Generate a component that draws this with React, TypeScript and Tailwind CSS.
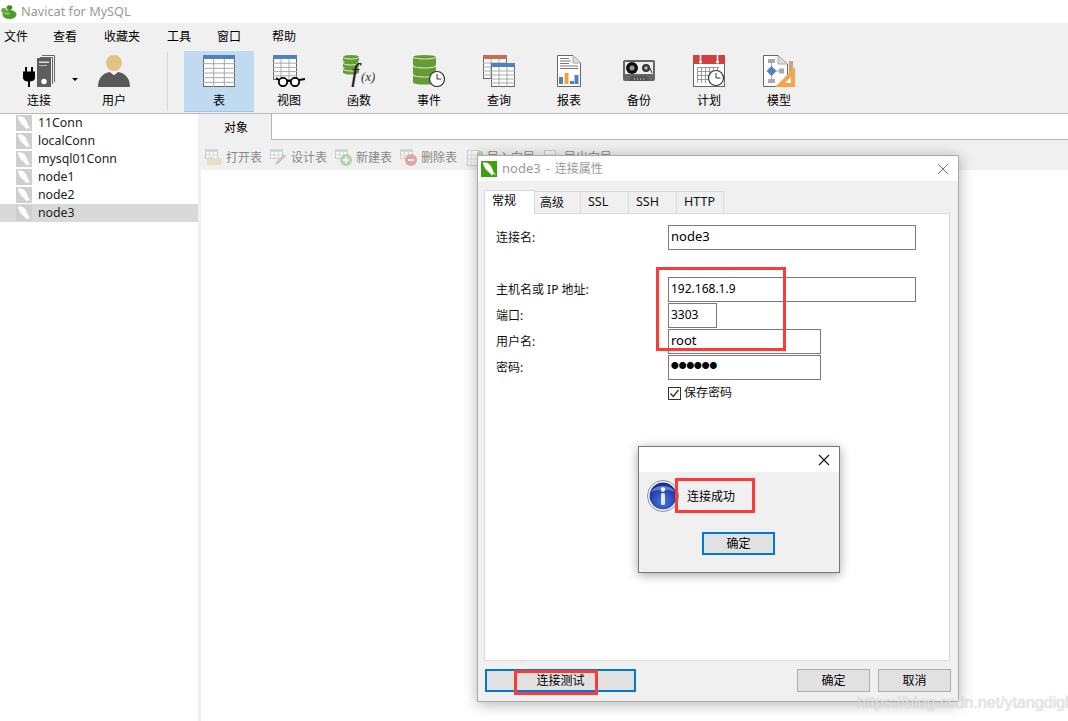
import React from 'react';

// Small dolphin used on connection rows and the dialog title
const Dolphin: React.FC<{ bg: string; className?: string }> = ({ bg, className }) => (
  <svg width="16" height="16" viewBox="0 0 16 16" className={className}>
    <rect width="16" height="16" fill={bg} />
    <path d="M1.5 1.5 H5 C8 2 10 4.5 11 7.5 C12 10 13 12 15 14.5 L11.5 12.5 L11.5 15 C9.5 13.5 8.5 11.5 6.5 10 C4 8.5 3 5 1.5 1.5 Z" fill="#fff" />
  </svg>
);

const NavicatLogo = () => (
  <svg width="16" height="14" viewBox="0 0 16 14">
    <ellipse cx="8.5" cy="9.5" rx="7" ry="4.5" fill="#4f9a2c" />
    <ellipse cx="2.8" cy="5.5" rx="2.6" ry="2.4" fill="#62ab35" />
    <ellipse cx="8.5" cy="2.6" rx="2.8" ry="2.4" fill="#3f8a24" />
    <ellipse cx="6" cy="8.5" rx="3" ry="1.6" fill="#7cc44c" />
  </svg>
);

const ConnIcon = () => (
  <svg width="32" height="32" viewBox="0 0 32 32">
    <path d="M19 0.5 H31.5 V27" stroke="#666" strokeWidth="1" fill="none" />
    <path d="M17 2.5 H29.5 V29" stroke="#666" strokeWidth="1" fill="none" />
    <rect x="14" y="3" width="14" height="29" fill="#5e5e5e" />
    <rect x="16" y="6.5" width="10" height="1.5" fill="#ddd" />
    <rect x="16" y="10" width="8" height="1" fill="#bbb" />
    <circle cx="21" cy="26.5" r="2.7" fill="#fff" />
    <path d="M3 12 V17 M9 12 V17" stroke="#000" strokeWidth="2" />
    <path d="M0 16.5 H12 V23 C12 25.5 8.5 26.5 7 26.5 V32 H5 V26.5 C3.5 26.5 0 25.5 0 23 Z" fill="#000" />
  </svg>
);

const UserIcon = () => (
  <svg width="32" height="32" viewBox="0 0 32 32">
    <circle cx="16" cy="8" r="8" fill="#e3c282" />
    <path d="M0 32 C0 22 6 18 12 17 L16 20 L20 17 C26 18 32 22 32 32 Z" fill="#595959" />
    <path d="M12 17 L16 20 L20 17 L16 18 Z" fill="#fff" />
  </svg>
);

const GridTable = ({ x, y, w, h, head, rows = 6, cols = 3 }: { x: number; y: number; w: number; h: number; head: string; rows?: number; cols?: number }) => (
  <g>
    <rect x={x + 0.5} y={y + 0.5} width={w - 1} height={h - 1} fill="#fff" stroke="#666" />
    {Array.from({ length: rows - 1 }).map((_, i) => (
      <path key={i} d={`M${x} ${y + 4 + ((h - 4) * (i + 1)) / rows} H${x + w}`} stroke="#a9a9a9" strokeWidth="1" />
    ))}
    {Array.from({ length: cols - 1 }).map((_, i) => (
      <path key={i} d={`M${x + (w * (i + 1)) / cols} ${y + 4} V${y + h}`} stroke="#a9a9a9" strokeWidth="1" />
    ))}
    <rect x={x} y={y} width={w} height={4} fill={head} />
  </g>
);

const TableIcon = () => (
  <svg width="32" height="32" viewBox="0 0 32 32">
    <GridTable x={0} y={0} w={32} h={32} head="#4f81bd" />
  </svg>
);

const ViewIcon = () => (
  <svg width="32" height="32" viewBox="0 0 32 32">
    <GridTable x={0} y={0} w={24} h={25} head="#4f81bd" rows={5} />
    <circle cx="10" cy="27" r="4.2" fill="#fff" stroke="#000" strokeWidth="1.8" />
    <circle cx="22" cy="27" r="4.2" fill="#fff" stroke="#000" strokeWidth="1.8" />
    <path d="M14 26 H18 M26 25 L32 24 M6 25 L3 23" stroke="#000" strokeWidth="1.8" />
  </svg>
);

// One slice of a database cylinder; stacked slices leave a curved gap between them
const Drum = ({ w, h, y = 0 }: { w: number; h: number; y?: number }) => (
  <g>
    <path d={`M0 ${y + 2} A${w / 2} 2 0 0 1 ${w} ${y + 2} V${y + h - 1.5} A${w / 2} 2 0 0 1 0 ${y + h - 1.5} Z`} fill="#669c35" />
    <path d={`M0 ${y + 2} A${w / 2} 2 0 0 0 ${w} ${y + 2}`} fill="none" stroke="#dfe8d4" strokeWidth="1" />
  </g>
);

const FuncIcon = () => (
  <svg width="32" height="32" viewBox="0 0 32 32">
    <Drum w={16} h={7} />
    <Drum w={16} h={7} y={6} />
    <Drum w={16} h={7} y={12} />
    <text x="8" y="27" fontFamily="Liberation Serif, serif" fontStyle="italic" fontSize="27" fill="#222">f</text>
    <text x="18" y="26" fontFamily="Liberation Serif, serif" fontStyle="italic" fontSize="13" fill="#333">(x)</text>
  </svg>
);

const Clock = ({ cx, cy, r }: { cx: number; cy: number; r: number }) => (
  <g>
    <circle cx={cx} cy={cy} r={r} fill="#fff" stroke="#333" strokeWidth="1.2" />
    <path d={`M${cx} ${cy - r + 2.5} V${cy} H${cx + r - 3}`} stroke="#333" strokeWidth="1" fill="none" />
  </g>
);

const EventIcon = () => (
  <svg width="32" height="32" viewBox="0 0 32 32">
    <Drum w={23} h={11} />
    <Drum w={23} h={11} y={9} />
    <Drum w={23} h={11} y={18} />
    <Clock cx={24} cy={24} r={7.5} />
  </svg>
);

const QueryIcon = () => (
  <svg width="32" height="32" viewBox="0 0 32 32">
    <GridTable x={0} y={0} w={24} h={24} head="#cf6a4c" rows={5} />
    <GridTable x={8} y={8} w={24} h={24} head="#4f81bd" rows={5} />
  </svg>
);

const ReportIcon = () => (
  <svg width="24" height="32" viewBox="0 0 24 32">
    <path d="M0.5 0.5 H16 L23.5 8 V31.5 H0.5 Z" fill="#fff" stroke="#666" />
    <path d="M16 0.5 V8 H23.5" fill="#ddd" stroke="#aaa" />
    <path d="M3 3.5 H12 M3 6 H14 M3 8.5 H12 M3 11 H21 M3 13.5 H21" stroke="#777" strokeWidth="1" />
    <rect x="2" y="22" width="4" height="7" fill="#4f81bd" />
    <rect x="7.5" y="18" width="4" height="11" fill="#f79f3f" />
    <rect x="13" y="26" width="4" height="3" fill="#4f81bd" />
    <rect x="17.5" y="20" width="4" height="9" fill="#4f81bd" />
  </svg>
);

const BackupIcon = () => (
  <svg width="32" height="32" viewBox="0 0 32 32">
    <rect x="0" y="5" width="32" height="21" rx="2" fill="#666" />
    <rect x="2" y="7" width="28" height="12" fill="#eee" />
    <circle cx="9" cy="13" r="6" fill="#111" />
    <circle cx="9" cy="13" r="2.5" fill="#999" />
    <circle cx="23" cy="13" r="4" fill="#333" />
    <circle cx="23" cy="13" r="1.7" fill="#bbb" />
    <path d="M27 13 L29 18" stroke="#333" strokeWidth="1" />
    <path d="M6 26 L8 21 H24 L26 26 Z" fill="#555" />
    <path d="M11 24 H21" stroke="#ddd" strokeWidth="1" strokeDasharray="1 2" />
  </svg>
);

const PlanIcon = () => (
  <svg width="32" height="32" viewBox="0 0 32 32">
    <rect x="0.5" y="0.5" width="31" height="31" fill="#fff" stroke="#666" />
    <rect x="0" y="0" width="32" height="9" fill="#d13f3f" />
    <path d="M7.5 0 V7 M24.5 0 V7" stroke="#fff" strokeWidth="1.5" />
    <circle cx="7.5" cy="7" r="1.5" fill="#fff" />
    <circle cx="24.5" cy="7" r="1.5" fill="#fff" />
    <path d="M4.5 12.5 H26 M4.5 16.5 H26 M4.5 20.5 H18 M4.5 24.5 H16 M4.5 12.5 V28 M8.5 12.5 V28 M12.5 12.5 V28 M16.5 12.5 V28 M20.5 12.5 V18 M24.5 12.5 V18" stroke="#999" strokeWidth="1" fill="none" />
    <Clock cx={23} cy={23} r={7.5} />
  </svg>
);

const ModelIcon = () => (
  <svg width="32" height="32" viewBox="0 0 32 32">
    <path d="M0.5 0.5 H15 L24.5 9 V31.5 H0.5 Z" fill="#fff" stroke="#666" />
    <path d="M15 0.5 V9 H24.5" fill="#ddd" stroke="#aaa" />
    <rect x="5" y="4" width="7" height="4" fill="#aaa" />
    <rect x="5" y="24" width="7" height="4" fill="#aaa" />
    <path d="M8.5 8 V24 M13 16 H18" stroke="#aaa" strokeWidth="1" />
    <rect x="16" y="13.5" width="5" height="5" fill="#aaa" />
    <path d="M8.5 11 L13.5 16 L8.5 21 L3.5 16 Z" fill="#4f81bd" />
    <rect x="26" y="6" width="4" height="17" fill="#c9a876" />
    <path d="M32 12 V32 H12 Z" fill="#f7a34f" />
    <path d="M28 22 V28 H22 Z" fill="#fff" />
  </svg>
);

const Sm = ({ children }: { children: React.ReactNode }) => (
  <svg width="18" height="18" viewBox="0 0 18 18" className="opacity-40 shrink-0">{children}</svg>
);

const MiniTable = () => (
  <g>
    <rect x="0.5" y="0.5" width="12" height="9" fill="#fff" stroke="#999" />
    <rect x="0" y="0" width="13" height="3" fill="#9bb" />
    <path d="M4.5 3 V9 M8.5 3 V9 M1 6 H12" stroke="#bbb" />
  </g>
);

const actions = [
  { label: '打开表', width: 'w-[65px]', icon: <Sm><MiniTable /><path d="M2 16 L3 8 H8 L9 9 H17 L16 16 Z" fill="#d8c48a" /></Sm> },
  { label: '设计表', width: 'w-[65px]', icon: <Sm><MiniTable /><path d="M5 16 L7 12 L14 5 L16 7 L9 14 Z" fill="#888" /></Sm> },
  { label: '新建表', width: 'w-[65px]', icon: <Sm><MiniTable /><circle cx="11" cy="11" r="6" fill="#6cab3f" /><path d="M11 8 V14 M8 11 H14" stroke="#fff" strokeWidth="2" /></Sm> },
  { label: '删除表', width: 'w-[66px]', icon: <Sm><MiniTable /><circle cx="11" cy="11" r="6" fill="#c33" /><path d="M8 11 H14" stroke="#fff" strokeWidth="2" /></Sm> },
  { label: '导入向导', width: 'w-[77px]', icon: <Sm><rect x="1.5" y="1.5" width="11" height="15" fill="#fff" stroke="#999" /><path d="M1.5 6 H12.5 M1.5 10 H12.5 M5 1.5 V16" stroke="#bbb" /><circle cx="14" cy="5" r="3" fill="#6cab3f" /></Sm> },
  { label: '导出向导', width: 'w-[77px]', icon: <Sm><rect x="1.5" y="1.5" width="11" height="15" fill="#fff" stroke="#999" /><path d="M1.5 6 H12.5 M1.5 10 H12.5" stroke="#bbb" /></Sm> },
];

const menus = [
  { label: '文件', cls: 'ml-[4px]' },
  { label: '查看', cls: 'ml-[25px]' },
  { label: '收藏夹', cls: 'ml-[27px]' },
  { label: '工具', cls: 'ml-[27px]' },
  { label: '窗口', cls: 'ml-[26px]' },
  { label: '帮助', cls: 'ml-[31px]' },
];

const objects = [
  { label: '表', icon: <TableIcon />, active: true },
  { label: '视图', icon: <ViewIcon /> },
  { label: '函数', icon: <FuncIcon /> },
  { label: '事件', icon: <EventIcon /> },
  { label: '查询', icon: <QueryIcon /> },
  { label: '报表', icon: <ReportIcon /> },
  { label: '备份', icon: <BackupIcon /> },
  { label: '计划', icon: <PlanIcon /> },
  { label: '模型', icon: <ModelIcon /> },
];

const conns = ['11Conn', 'localConn', 'mysql01Conn', 'node1', 'node2', 'node3'];

const TopButton: React.FC<{ label: string; icon: React.ReactNode; active?: boolean; cls?: string }> = ({ label, icon, active, cls }) => (
  <div className={`w-[70px] h-[61px] flex flex-col items-center ${active ? 'bg-[#bfdaf1] border-b border-[#9ec5e8]' : ''} ${cls ?? ''}`}>
    <div className="h-[32px] mt-[4px] flex items-start justify-center">{icon}</div>
    <div className="mt-[5px] leading-[18px] text-black">{label}</div>
  </div>
);

const Field: React.FC<{ label?: string; value: string; width: string; cls?: string; textCls?: string }> = ({ label, value, width, cls, textCls }) => (
  <div className={`flex items-center h-[25px] ${cls ?? ''}`}>
    <div className="w-[172px] text-[#111]">{label}</div>
    <div className={`${width} h-[25px] border border-[#7a7a7a] bg-white px-[2px] leading-[21px] text-black ${textCls ?? 'text-[13px]'}`}>{value}</div>
  </div>
);

const DialogButton: React.FC<{ label: string; width: string; focus?: boolean }> = ({ label, width, focus }) => (
  <div className={`${width} h-[23px] flex items-center justify-center bg-[#e1e1e1] text-black ${focus ? 'border-2 border-[#0078d7]' : 'border border-[#adadad]'}`}>
    {label}
  </div>
);

const App: React.FC = () => {
  return (
    <div className="relative w-[1068px] h-[721px] overflow-hidden bg-white text-[12px] font-['Noto_Sans','Noto_Sans_CJK_SC',sans-serif]">
      {/* Title bar */}
      <div className="h-[23px] flex items-center bg-white pl-[1px]">
        <NavicatLogo />
        <span className="ml-[4px] text-[12.7px] text-[#999]">Navicat for MySQL</span>
      </div>

      {/* Menu */}
      <div className="h-[28px] bg-[#f0f0f0] flex items-center text-black pb-[1px]">
        {menus.map((m) => (
          <span key={m.label} className={m.cls}>{m.label}</span>
        ))}
      </div>

      {/* Toolbar */}
      <div className="h-[63px] bg-[#f0f0f0] border-b border-[#b9b9b9] flex items-start">
        <div className="w-[4px]" />
        <div className="relative">
          <TopButton label="连接" icon={<ConnIcon />} />
          <span className="absolute left-[68px] top-[27px] w-0 h-0 border-x-[3px] border-x-transparent border-t-[3px] border-t-black" />
        </div>
        <TopButton label="用户" icon={<UserIcon />} cls="ml-[5px]" />
        <div className="ml-[18px] w-px h-[59px] mt-[1px] bg-[#d8d8d8]" />
        <div className="ml-[16px] flex">
          {objects.map((o) => (
            <TopButton key={o.label} label={o.label} icon={o.icon} active={o.active} />
          ))}
        </div>
      </div>

      {/* Body */}
      <div className="flex h-[607px]">
        <div className="w-[198px] bg-white">
          {conns.map((c) => (
            <div key={c} className={`h-[18px] flex items-center pl-[16px] text-[#222] text-[12.3px] ${c === 'node3' ? 'bg-[#d9d9d9]' : ''}`}>
              <Dolphin bg="#cfcfcf" />
              <span className="ml-[6px]">{c}</span>
            </div>
          ))}
        </div>
        <div className="flex-1 bg-[#f0f0f0] flex flex-col">
          <div className="h-[26px] flex">
            <div className="w-[73px] flex items-center justify-center pl-[3px] pt-[2px] text-black">对象</div>
            <div className="flex-1 bg-white border-l border-b border-[#b5b5b5]" />
          </div>
          <div className="h-[30px] flex items-center pl-[7px] pt-[6px]">
            {actions.map((a) => (
              <div key={a.label} className={`${a.width} flex items-center text-[#888]`}>
                {a.icon}
                <span className="ml-[3px]">{a.label}</span>
              </div>
            ))}
          </div>
          <div className="flex-1 ml-[3px] bg-white" />
        </div>
      </div>

      {/* Connection properties dialog */}
      <div className="absolute left-[477px] top-[155px] w-[482px] h-[547px] border border-[#a9a9a9] bg-[#f0f0f0] shadow-[0_2px_14px_rgba(0,0,0,0.3)] flex flex-col">
        <div className="h-[25px] bg-white flex items-center pl-[3px] pt-[1px] shrink-0">
          <Dolphin bg="#3fa00f" />
          <span className="ml-[5px] text-[12px] text-[#999] [word-spacing:2px]"><span className="text-[13px]">node3</span> - 连接属性</span>
          <svg width="12" height="12" viewBox="0 0 12 12" className="ml-auto mr-[9px]">
            <path d="M1 1 L11 11 M11 1 L1 11" stroke="#777" strokeWidth="1" />
          </svg>
        </div>
        <div className="pl-[6px] pr-[7px] pt-[8px] flex-1 flex flex-col">
          <div className="flex h-[24px] items-end">
            <div className="w-[51px] h-[24px] bg-white border border-b-0 border-[#d9d9d9] pl-[7px] pt-[1px] text-black -mb-px relative z-10">常规</div>
            {[
              { t: '高级', w: 'w-[46px]', pad: 'pl-[5px]' },
              { t: 'SSL', w: 'w-[48px]', pad: 'pl-[7px] text-[12.5px]' },
              { t: 'SSH', w: 'w-[48px]', pad: 'pl-[7px] text-[12.5px]' },
              { t: 'HTTP', w: 'w-[47px]', pad: 'pl-[7px] text-[12.5px]' },
            ].map((tab) => (
              <div key={tab.t} className={`${tab.w} ${tab.pad} h-[22px] border-t border-r border-[#d9d9d9] flex items-center text-[#111]`}>{tab.t}</div>
            ))}
          </div>
          <div className="w-[466px] h-[448px] bg-white border border-[#d9d9d9] pl-[11px] pt-[11px]">
            <Field label="连接名:" value="node3" width="w-[248px]" />
            <Field label="主机名或 IP 地址:" value="192.168.1.9" width="w-[248px]" cls="mt-[27px]" textCls="text-[12px]" />
            <Field label="端口:" value="3303" width="w-[49px]" cls="mt-[1px]" textCls="text-[12px]" />
            <Field label="用户名:" value="root" width="w-[153px]" cls="mt-[1px]" />
            <Field label="密码:" value="●●●●●●" width="w-[153px]" cls="mt-[1px]" textCls="text-[7.7px]" />
            <div className="flex items-center mt-[6px] ml-[172px] h-[14px]">
              <svg width="13" height="13" viewBox="0 0 13 13">
                <rect x="0.5" y="0.5" width="12" height="12" fill="#fff" stroke="#333" />
                <path d="M2.5 6.5 L5.2 9.5 L10.5 3" stroke="#333" strokeWidth="1.3" fill="none" />
              </svg>
              <span className="ml-[3px] text-[#111]">保存密码</span>
            </div>
          </div>
          <div className="flex justify-between mt-[8px] ml-[1px]">
            <DialogButton label="连接测试" width="w-[151px]" focus />
            <div className="flex gap-[8px]">
              <DialogButton label="确定" width="w-[73px]" />
              <DialogButton label="取消" width="w-[73px]" />
            </div>
          </div>
        </div>
      </div>

      {/* Success message box */}
      <div className="absolute left-[638px] top-[446px] w-[202px] h-[127px] border border-[#777] bg-[#f0f0f0] shadow-[0_2px_10px_rgba(0,0,0,0.35)]">
        <div className="h-[25px] bg-white flex items-center justify-end pr-[9px]">
          <svg width="12" height="12" viewBox="0 0 12 12">
            <path d="M1 1 L11 11 M11 1 L1 11" stroke="#111" strokeWidth="1.1" />
          </svg>
        </div>
        <div className="flex items-center pl-[8px] pt-[8px]">
          <svg width="32" height="32" viewBox="0 0 32 32">
            <defs>
              <radialGradient id="infoBlue" cx="0.5" cy="0.7" r="0.7">
                <stop offset="0" stopColor="#4a78e0" />
                <stop offset="1" stopColor="#10288e" />
              </radialGradient>
            </defs>
            <circle cx="16" cy="16" r="15.5" fill="#fff" stroke="#8a8a8a" />
            <circle cx="16" cy="16" r="13.5" fill="url(#infoBlue)" />
            <path d="M4 12 C8 4 24 4 28 12 C22 9 10 9 4 12 Z" fill="#8fa8e6" opacity="0.6" />
            <circle cx="16" cy="9.5" r="2.2" fill="#fff" />
            <rect x="14" y="13" width="4" height="12" rx="1.5" fill="#e8e8e8" />
          </svg>
          <span className="ml-[8px] mt-[1px] text-black">连接成功</span>
        </div>
        <div className="flex justify-center mt-[20px] pr-[1px]">
          <DialogButton label="确定" width="w-[73px]" focus />
        </div>
      </div>

      {/* Red annotation boxes */}
      <div className="absolute left-[656px] top-[267px] w-[130px] h-[84px] border-[3px] border-[#fc3a3a]" />
      <div className="absolute left-[675px] top-[478px] w-[80px] h-[35px] border-[3px] border-[#fc3a3a]" />
      <div className="absolute left-[514px] top-[670px] w-[84px] h-[25px] border-[3px] border-[#fc3a3a]" />

      {/* Watermark */}
      <div className="absolute left-[857px] top-[692px] text-[16px] leading-[22px] text-white/70 [text-shadow:0_0_1px_rgba(120,120,120,0.6)] font-['Liberation_Sans',sans-serif] whitespace-nowrap">
        https://blog.csdn.net/ytangdigl
      </div>
    </div>
  );
};

export default App;
